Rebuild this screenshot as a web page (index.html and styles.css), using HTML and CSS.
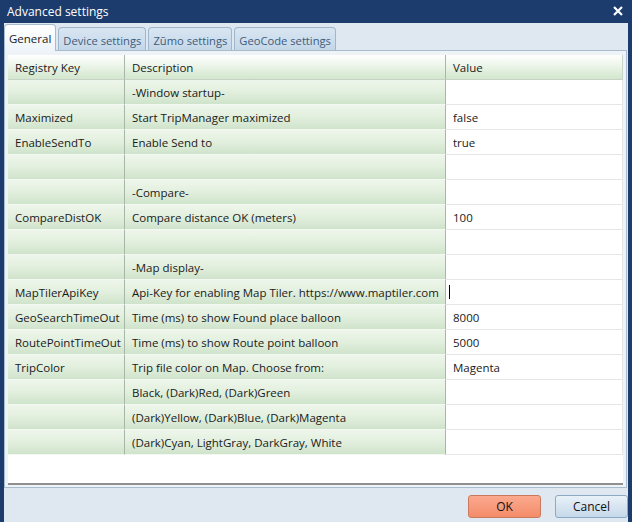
FILE: index.html
```html
<!DOCTYPE html>
<html>
<head>
<meta charset="utf-8">
<link rel="stylesheet" href="styles.css">
</head>
<body>
<div class="window">
  <div class="titlebar">
    <span class="title">Advanced settings</span>
    <svg class="close" width="10" height="10" viewBox="0 0 10 10"><path d="M1 1 L9 9 M9 1 L1 9" stroke="#fff" stroke-width="2.2"/></svg>
  </div>
  <div class="client">
    <div class="tabs">
      <div class="tab active">General</div>
      <div class="tab">Device settings</div>
      <div class="tab">Zũmo settings</div>
      <div class="tab">GeoCode settings</div>
    </div>
    <div class="panel">
      <div class="grid">
        <div class="hd">Registry Key</div><div class="hd">Description</div><div class="hd hv">Value</div>
        <div class="k"></div><div class="d">-Window startup-</div><div class="v"></div>
        <div class="k">Maximized</div><div class="d">Start TripManager maximized</div><div class="v">false</div>
        <div class="k">EnableSendTo</div><div class="d">Enable Send to</div><div class="v">true</div>
        <div class="k"></div><div class="d"></div><div class="v"></div>
        <div class="k"></div><div class="d">-Compare-</div><div class="v"></div>
        <div class="k">CompareDistOK</div><div class="d">Compare distance OK (meters)</div><div class="v">100</div>
        <div class="k"></div><div class="d"></div><div class="v"></div>
        <div class="k"></div><div class="d">-Map display-</div><div class="v"></div>
        <div class="k">MapTilerApiKey</div><div class="d">Api-Key for enabling Map Tiler. https://www.maptiler.com</div><div class="v"><span class="caret"></span></div>
        <div class="k">GeoSearchTimeOut</div><div class="d">Time (ms) to show Found place balloon</div><div class="v">8000</div>
        <div class="k">RoutePointTimeOut</div><div class="d">Time (ms) to show Route point balloon</div><div class="v">5000</div>
        <div class="k">TripColor</div><div class="d">Trip file color on Map. Choose from:</div><div class="v">Magenta</div>
        <div class="k"></div><div class="d">Black, (Dark)Red, (Dark)Green</div><div class="v"></div>
        <div class="k"></div><div class="d">(Dark)Yellow, (Dark)Blue, (Dark)Magenta</div><div class="v"></div>
        <div class="k"></div><div class="d">(Dark)Cyan, LightGray, DarkGray, White</div><div class="v"></div>
      </div>
    </div>
    <div class="buttons">
      <div class="btn ok">OK</div>
      <div class="btn cancel">Cancel</div>
    </div>
  </div>
</div>
</body>
</html>
```

FILE: styles.css
```css
* { box-sizing: border-box; }
html, body { margin: 0; padding: 0; }
body {
  width: 632px; height: 522px; overflow: hidden;
  font-family: "Open Sans", "Noto Sans", sans-serif;
  font-size: 11.5px; color: #1a1a1a;
}
.window {
  width: 632px; height: 522px;
  background: #1b3c6c;
  display: flex; flex-direction: column;
  padding: 0 4px 0 4px;
}
.titlebar {
  height: 23px; flex: none;
  display: flex; align-items: center; justify-content: space-between;
  padding: 0 5px 1px 3px;
  color: #fff; font-size: 12px;
}
.client {
  flex: 1; background: #dfe8f1;
  display: flex; flex-direction: column;
}
.tabs { display: flex; height: 27px; align-items: flex-end; gap: 2px; }
.tab {
  height: 23px; padding: 2px 4px 0 4px;
  border: 1px solid #9fb6cc; border-bottom: none;
  border-radius: 4px 4px 0 0;
  background: linear-gradient(#d9e6f2, #c5d7e8);
  color: #3d5c7c; display: flex; align-items: center;
  font-size: 11.2px;
}
.tab.active {
  height: 27px; background: linear-gradient(#ffffff, #eef4f9);
  color: #1a1a1a; padding: 0 4px 0 4px;
  border-color: #a9bccf; position: relative; z-index: 1; margin-bottom: -1px;
  font-size: 11.5px;
}
.panel {
  height: 438px; flex: none;
  margin-right: 1px;
  border: 1px solid #a9bccf; background: #eef3f8;
  padding: 4px 3px 2px 3px;
}
.grid {
  height: 100%;
  background: #fff;
  border-bottom: 2px solid #8f8f8f;
  display: grid;
  grid-template-columns: 117px 321px 177px;
  grid-auto-rows: 25px;
  align-content: start;
  padding-right: 1px;
}
.grid > div { display: flex; align-items: center; padding-left: 7px; white-space: nowrap; overflow: visible; }
.hd {
  background: linear-gradient(#ffffff 0%, #eef6eb 40%, #d2e6cd 100%);
  border-right: 1px solid #a9b6a9; border-bottom: 1px solid #c8d2c8;
}
.hd.hv { border-right: 1px solid #c9d4c9; }
.k, .d {
  background: linear-gradient(#eef6eb 0%, #e2efde 50%, #cfe3cb 100%);
  border-right: 1px solid #a7b7a7; border-bottom: 1px solid #f4f8f3;
}
.v { border-bottom: 1px solid #e6e6e6; border-right: 1px solid #e6e6e6; }
.caret { display: block; width: 1px; height: 14px; background: #000; margin-left: -4px; }
.buttons {
  flex: 1; display: flex; justify-content: flex-end; align-items: center;
  gap: 14px; padding: 2px 0 0 0;
}
.btn {
  width: 73px; height: 23px; border-radius: 3px;
  display: flex; align-items: center; justify-content: center;
  font-size: 12px; color: #111;
}
.ok { background: linear-gradient(#fba98f, #f48c6a); border: 1px solid #c97a5e; }
.cancel { background: linear-gradient(#e9f1f8, #c5d9ea); border: 1px solid #8ea9c3; }
```
